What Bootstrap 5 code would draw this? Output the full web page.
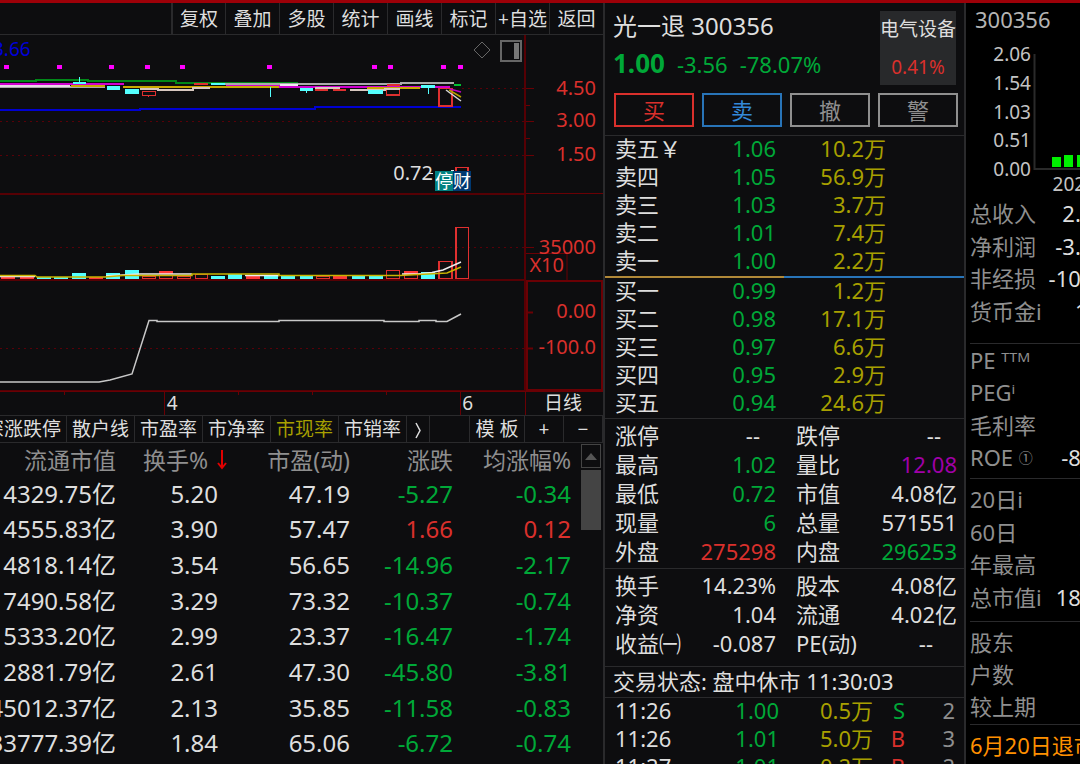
<!DOCTYPE html>
<html lang="zh-CN">
<head>
<meta charset="utf-8">
<meta name="viewport" content="width=device-width, initial-scale=1">
<title>光一退 300356</title>
<link href="https://cdn.jsdelivr.net/npm/bootstrap@5.3.0/dist/css/bootstrap.min.css" rel="stylesheet">
<style>
:root{--panel:#0d0d0f;--rule:#2a2a2c;--up:#d9302c;--down:#00a838;--vol:#a8a000;--ink:#dedede;--dim:#8f8f8f}
body{background:var(--panel);color:var(--ink);font-family:"Noto Sans","Noto Sans CJK SC",sans-serif;font-size:22px;line-height:28px;border-top:3px solid #9c0008;white-space:nowrap}
button{background:none;border:0;color:inherit;padding:0}
.up{color:var(--up)}.down{color:var(--down)}.vol{color:var(--vol)}.dim{color:var(--dim)}.purple{color:#a000a8}.amber{color:#ff9000;padding-top:6px}
.rule-b{border-bottom:1px solid var(--rule)}
.rule-t{border-top:1px solid var(--rule)}
.left-pane{min-width:0;flex:1 1 0}
.quote-pane{flex:0 0 363px;border-left:2px solid var(--rule);border-right:2px solid var(--rule)}
.info-pane{flex:0 0 114px;background:#000}
.tool-row{height:32px;font-size:19px;line-height:30px}
.tool-row button{width:54px;border-left:1px solid var(--rule)}
.tool-row button:first-child{border-left-width:2px}
.plot{height:356px}
.plot-main{min-width:0}
.axis-col{flex:0 0 77px}
.fs-axis{font-size:20px}
.time-row{height:24px;font-size:19px;line-height:25px}
.month-a{left:27%}.month-b{right:130px}.period{right:21px}
.price-low{right:93px;top:124px;font-size:20px}
.flags{right:55px;top:136px;font-size:18px;line-height:20px;color:#fff}
.flag-stop{background:#008080}.flag-fin{background:#003870}
.base-val{left:-7px;top:0;font-size:19px;color:#0000d8}
.chart-tools{right:4px;top:3px}
.tab-row{height:28px;font-size:19px;line-height:26px}
.tab-row button,.tab-gap{flex:0 0 68px;min-width:0;border-right:1px solid var(--rule)}
.tab-row .tab-first{flex-basis:67px;overflow:hidden;padding-right:5px}
.tab-row .tab-gap{flex:1 1 0}
.tab-row .w-more{flex-basis:23px}.tab-row .w-tpl{flex-basis:55px}.tab-row .w-sign{flex-basis:39px}
.rank-wrap{min-width:0}
.rank{width:100%;height:318px;font-size:24px;table-layout:fixed}
.rank thead{height:33px}
.rank th{font-weight:400;font-size:23px;color:#8f8f8f}
.rank td,.rank th{padding:0;text-align:right}
.rank tbody td{height:35px}
.sort-key{margin-right:-10px}
.scroller{flex:0 0 22px;margin-left:10px;padding:1px 2px 0 0;gap:2px}
.scroller button{height:24px;border:1px solid #444}
.thumb{height:60px;background:#444}
.title-line{font-size:24px;line-height:30px}
.last-price{font-size:26px}
.sector{width:76px;height:74px;background:#28292b;font-size:19px}
.trade-row{padding:8px 0 8px 9px}
.btn-trade{height:34px;flex:0 0 80px;border:2px solid #8f8f8f;color:#8f8f8f;border-radius:0;font-size:22px;line-height:28px}
.btn-trade.buy{border-color:var(--up);color:var(--up)}
.btn-trade.sell{border-color:#2874b8;color:#3388d8}
.sheet{table-layout:fixed;width:100%;line-height:24px}
.sheet td,.sheet th{padding:0;font-weight:400;height:28px;vertical-align:top}
.sheet tr>:first-child{padding-left:10px}
.sheet th:nth-child(3){padding-left:20px}
.facts td,.facts th{height:29px;line-height:28px}
.facts-box{padding:2px 0}
.status{line-height:28px;padding-bottom:2px}
.split{height:2px;background:linear-gradient(90deg,#b08838 0 50%,#2874b8 50%)}
.info-code{color:#b4b4b4;padding:2px 0 2px 5px}
.info-group{height:130px;color:#8f8f8f}
.info-group b{font-weight:400;color:var(--ink)}
.info-group>div{width:142px}
.info-group.income>div{width:158px}
.roe-mark{font-size:14px;vertical-align:3px}
.holders{padding-top:6px}
.mini{height:162px;font-size:19px}
</style>
</head>
<body class="vh-100 overflow-hidden">
<div class="d-flex h-100 overflow-hidden">

<main class="left-pane overflow-hidden">
  <div class="tool-row d-flex justify-content-end rule-b">
    <button type="button">复权</button><button type="button">叠加</button><button type="button">多股</button><button type="button">统计</button><button type="button">画线</button><button type="button">标记</button><button type="button">+自选</button><button type="button">返回</button>
  </div>

  <div class="plot d-flex">
    <div class="plot-main flex-grow-1 position-relative overflow-hidden">
      <svg width="100%" height="356" viewBox="0 35 526 356" preserveAspectRatio="none" fill="none" class="d-block" shape-rendering="crispEdges">
        <g stroke="#580008" stroke-width="1" stroke-dasharray="2 4"><path d="M462 88.500H526M0 121.500H526M0 155.500H526M0 247.500H526M0 348.500H526"/></g>
        <g stroke="#560004" stroke-width="2"><path d="M0 194H526M0 280H526M0 391H526"/><path d="M525 35V391"/></g>
        <g fill="#f0f"><path d="M4 65h5v4h-5zM57 65h5v4h-5zM109 65h5v4h-5zM145 65h5v4h-5zM180 65h5v4h-5zM267 65h5v4h-5zM372 65h5v4h-5zM388 65h5v4h-5zM441 65h5v4h-5zM458 65h5v4h-5z"/></g>
        <!-- price lines -->
        <g stroke-width="2">
          <path stroke="#008818" d="M0 81H36V79.500H88V81H176V82.500H298"/>
          <path stroke="#aaa" d="M0 87H105M212 84H401V82.500H454"/>
          <path stroke="#e8d8e8" d="M0 86H70"/>
          <path stroke="#d000d0" d="M0 84H124M226 85.500H280M279 87H450"/>
          <path stroke="#c8a800" d="M71 86H105M123 87H279M367 88H420"/>
          <path stroke="#d8c8c0" d="M140 88.500H158V90H193V88H210M315 88H340M350 89.500H385V88.500H400"/>
          <path stroke="#00c030" d="M454 84.500H461"/>
          <path stroke="#0000d0" d="M0 110H140V108.500H315V107H461"/>
          <path stroke="#eee" d="M280 85H298"/>
        </g>
        <g fill="#54ffff"><path d="M73 81.500h13v2.500H73zM79 77h1v6h-1zM107 86h13v4h-13zM125 89h14v5h-14zM211 82.500h14v2.500h-14zM270 87h1v10h-1zM300 88h13v3h-13zM306 91h1v2h-1zM368 90h15v3.500h-15zM421 85h14v3h-14zM428 88h1v6h-1z"/></g>
        <g stroke="#e03030" stroke-width="1.500"><path d="M142.500 91.500h13v4h-13zM148.500 96v1M194 84h14M315 90h13M333 90h13M387 85h13M386.500 90v5h13v-5M439 88.500h13v17.500h-13zM456 178V167.500H468V178"/></g>
        <g shape-rendering="auto" stroke-width="1.500"><path stroke="#d8d8d8" d="M446 90L461 101"/><path stroke="#b8a000" d="M449 90L461 97"/><path stroke="#c000c0" d="M450 89L461 92"/></g>
        <path stroke="#eee" d="M429 173.500H433M451 170.500H454"/>
        <!-- volume -->
        <g fill="#ff3838"><path d="M1 277h14v2H1zM20 277h14v2H20zM89 277h14v2H89zM246 275h14v4h-14zM333 276h14v3h-14zM159 271h14v3h-14zM404 271h14v3h-14z"/></g>
        <g fill="#54ffff"><path d="M37 277h14v2H37zM54 277h14v2H54zM72 273h14v6H72zM106 273h14v6h-14zM125 270h14v9h-14zM211 276h14v3h-14zM228 274h14v5h-14zM264 275h14v4h-14zM281 276h14v3h-14zM300 276h13v3h-13zM352 276h13v3h-13zM369 276h14v3h-14zM421 272h14v7h-14z"/></g>
        <g stroke="#e03030"><path d="M142.500 276.500h13v2h-13zM159.500 275.500h13v3h-13zM177.500 276.500h13v2h-13zM195.500 274.500h12v4h-12zM316.500 276.500h13v2h-13zM386.500 270.500h13v8h-13zM404.500 274.500h13v4h-13z"/><path stroke-width="1.500" d="M439 261.500h13v17h-13zM456 227.500H468.500V278.500H456z"/></g>
        <g shape-rendering="auto" stroke-width="1.500"><path stroke="#eee" d="M0 276.500H35M106 276L123 275L140 274H192M245 275.500H279M402 274H418L432 272.500L443 270L461 262"/><path stroke="#c8b400" d="M0 275.500H35L37 277H105L123 275.500H192V274H279V275.500H400L447 273L461 267"/></g>
        <!-- indicator -->
        <path shape-rendering="auto" stroke="#c8c8c8" stroke-width="1.500" d="M0 382H99L110 380L132 374L149 320.500H157V321.500H279V320.500H384V321.500H419V320.500H436V321.500H447L461 314"/>
      </svg>
      <span class="base-val position-absolute">3.66</span>
      <span class="price-low position-absolute">0.72</span>
      <div class="flags position-absolute d-flex"><span class="flag-stop">停</span><span class="flag-fin">财</span></div>
      <svg class="chart-tools position-absolute" width="50" height="26" fill="none"><path stroke="#666" d="M10 4l8 8-8 8-8-8z"/><path stroke="#666" stroke-width="2" d="M29 3h20v20H29z"/><path fill="#777" d="M42 5h5v16h-5z"/></svg>
    </div>
    <svg class="axis-col fs-axis" width="77" height="356" viewBox="526 35 77 356" fill="none">
      <g stroke="#6a0004" stroke-width="1"><path d="M526 88.500h8M526 105.500h4M526 121.500h8M526 138.500h4M526 155.500h8M526 193.500h77M526 247.500h8M526 253.500h41V280"/><path stroke-width="2" d="M527 281H602V390H527zM527 312.500h6M527 348.500h6"/></g>
      <g fill="#d9302c" text-anchor="end"><text x="596" y="95">4.50</text><text x="596" y="127">3.00</text><text x="596" y="161">1.50</text><text x="596" y="254">35000</text><text x="564" y="272">X10</text><text x="596" y="318">0.00</text><text x="596" y="354">-100.0</text></g>
    </svg>
  </div>

  <div class="time-row position-relative">
    <svg class="w-100 d-block" height="24" viewBox="0 0 603 24" preserveAspectRatio="none"><path stroke="#6a0004" fill="none" d="M0 .5H603M164.500 0V24M460.500 0V24M525.500 0V24M64.500 0v4M238.500 0v4M312.500 0v4M386.500 0v4"/></svg>
    <span class="month-a position-absolute top-0 ps-1">4</span>
    <span class="month-b position-absolute top-0">6</span>
    <span class="period position-absolute top-0">日线</span>
  </div>

  <div class="tab-row d-flex rule-t rule-b">
    <button type="button" class="tab-first d-flex justify-content-end">深涨跌停</button><button type="button">散户线</button><button type="button">市盈率</button><button type="button">市净率</button><button type="button" class="vol">市现率</button><button type="button">市销率</button><button type="button" class="w-more" aria-label="更多"><svg width="9" height="17" fill="none" stroke="#ddd" stroke-width="1.500"><path d="M2 1l4 7.500L2 16"/></svg></button><span class="tab-gap"></span><button type="button" class="w-tpl">模 板</button><button type="button" class="w-sign">+</button><button type="button" class="w-sign">−</button>
  </div>

  <div class="d-flex">
    <div class="rank-wrap flex-grow-1">
    <table class="rank">
      <colgroup><col style="width:116px"><col style="width:102px"><col style="width:132px"><col style="width:103px"><col></colgroup>
      <thead><tr><th>流通市值</th><th><div class="sort-key d-flex justify-content-end align-items-center">换手%<svg width="12" height="22" class="ms-2" fill="none" stroke="#e00000" stroke-width="2"><path d="M6 1V19M2 14l4 5 4-5"/></svg></div></th><th>市盈(动)</th><th>涨跌</th><th>均涨幅%</th></tr></thead>
      <tbody>
      <tr><td>4329.75亿</td><td>5.20</td><td>47.19</td><td class="down">-5.27</td><td class="down">-0.34</td></tr>
      <tr><td>4555.83亿</td><td>3.90</td><td>57.47</td><td class="up">1.66</td><td class="up">0.12</td></tr>
      <tr><td>4818.14亿</td><td>3.54</td><td>56.65</td><td class="down">-14.96</td><td class="down">-2.17</td></tr>
      <tr><td>7490.58亿</td><td>3.29</td><td>73.32</td><td class="down">-10.37</td><td class="down">-0.74</td></tr>
      <tr><td>5333.20亿</td><td>2.99</td><td>23.37</td><td class="down">-16.47</td><td class="down">-1.74</td></tr>
      <tr><td>2881.79亿</td><td>2.61</td><td>47.30</td><td class="down">-45.80</td><td class="down">-3.81</td></tr>
      <tr><td><div class="d-flex justify-content-end">45012.37亿</div></td><td>2.13</td><td>35.85</td><td class="down">-11.58</td><td class="down">-0.83</td></tr>
      <tr><td><div class="d-flex justify-content-end">33777.39亿</div></td><td>1.84</td><td>65.06</td><td class="down">-6.72</td><td class="down">-0.74</td></tr>
      </tbody>
    </table>
    </div>
    <div class="scroller d-flex flex-column">
      <button type="button" class="w-100 d-flex align-items-center justify-content-center" aria-label="向上滚动"><svg width="12" height="7"><path fill="#555" d="M6 0l6 7H0z"/></svg></button>
      <div class="thumb"></div>
    </div>
  </div>
</main>

<section class="quote-pane overflow-hidden">
  <header class="d-flex justify-content-between pt-2 px-2">
    <div>
      <div class="title-line">光一退 300356</div>
      <div class="d-flex align-items-baseline gap-2 pt-2"><b class="last-price down">1.00</b><span class="down ms-1">-3.56</span><span class="down ms-1">-78.07%</span></div>
    </div>
    <div class="sector d-flex flex-column align-items-center justify-content-between py-1"><span>电气设备</span><span class="up">0.41%</span></div>
  </header>
  <div class="trade-row d-flex gap-2 rule-b">
    <button type="button" class="btn-trade buy">买</button><button type="button" class="btn-trade sell">卖</button><button type="button" class="btn-trade">撤</button><button type="button" class="btn-trade">警</button>
  </div>

  <table class="sheet">
    <colgroup><col style="width:90px"><col style="width:81px"><col style="width:110px"><col></colgroup>
    <tbody>
    <tr><th>卖五￥</th><td class="down text-end">1.06</td><td class="vol text-end">10.2万</td><td></td></tr>
    <tr><th>卖四</th><td class="down text-end">1.05</td><td class="vol text-end">56.9万</td><td></td></tr>
    <tr><th>卖三</th><td class="down text-end">1.03</td><td class="vol text-end">3.7万</td><td></td></tr>
    <tr><th>卖二</th><td class="down text-end">1.01</td><td class="vol text-end">7.4万</td><td></td></tr>
    <tr><th>卖一</th><td class="down text-end">1.00</td><td class="vol text-end">2.2万</td><td></td></tr>
    </tbody>
  </table>
  <div class="split"></div>
  <table class="sheet">
    <colgroup><col style="width:90px"><col style="width:81px"><col style="width:110px"><col></colgroup>
    <tbody>
    <tr><th>买一</th><td class="down text-end">0.99</td><td class="vol text-end">1.2万</td><td></td></tr>
    <tr><th>买二</th><td class="down text-end">0.98</td><td class="vol text-end">17.1万</td><td></td></tr>
    <tr><th>买三</th><td class="down text-end">0.97</td><td class="vol text-end">6.6万</td><td></td></tr>
    <tr><th>买四</th><td class="down text-end">0.95</td><td class="vol text-end">2.9万</td><td></td></tr>
    <tr><th>买五</th><td class="down text-end">0.94</td><td class="vol text-end">24.6万</td><td></td></tr>
    </tbody>
  </table>

  <div class="facts-box rule-t rule-b">
  <table class="sheet facts">
    <colgroup><col style="width:90px"><col style="width:81px"><col style="width:81px"><col style="width:100px"><col></colgroup>
    <tbody>
    <tr><th>涨停</th><td class="text-end pe-3">--</td><th>跌停</th><td class="text-end pe-3">--</td><td></td></tr>
    <tr><th>最高</th><td class="text-end down">1.02</td><th>量比</th><td class="text-end purple">12.08</td><td></td></tr>
    <tr><th>最低</th><td class="text-end down">0.72</td><th>市值</th><td class="text-end">4.08亿</td><td></td></tr>
    <tr><th>现量</th><td class="text-end down">6</td><th>总量</th><td class="text-end">571551</td><td></td></tr>
    <tr><th>外盘</th><td class="text-end up">275298</td><th>内盘</th><td class="text-end down">296253</td><td></td></tr>
    </tbody>
  </table>
  </div>
  <div class="facts-box pb-2 rule-b">
  <table class="sheet facts">
    <colgroup><col style="width:90px"><col style="width:81px"><col style="width:81px"><col style="width:100px"><col></colgroup>
    <tbody>
    <tr><th>换手</th><td class="text-end">14.23%</td><th>股本</th><td class="text-end">4.08亿</td><td></td></tr>
    <tr><th>净资</th><td class="text-end">1.04</td><th>流通</th><td class="text-end">4.02亿</td><td></td></tr>
    <tr><th>收益㈠</th><td class="text-end">-0.087</td><th>PE(动)</th><td class="text-end pe-4">--</td><td></td></tr>
    </tbody>
  </table>
  </div>
  <div class="status ps-2 rule-b">交易状态: 盘中休市 11:30:03</div>
  <table class="sheet">
    <colgroup><col style="width:90px"><col style="width:84px"><col style="width:94px"><col style="width:36px"><col style="width:46px"><col></colgroup>
    <tbody>
    <tr><td>11:26</td><td class="down text-end">1.00</td><td class="vol text-end">0.5万</td><td class="down text-end pe-1">S</td><td class="dim text-end">2</td><td></td></tr>
    <tr><td>11:26</td><td class="down text-end">1.01</td><td class="vol text-end">5.0万</td><td class="up text-end pe-1">B</td><td class="dim text-end">3</td><td></td></tr>
    <tr><td>11:27</td><td class="down text-end">1.01</td><td class="vol text-end">0.2万</td><td class="up text-end pe-1">B</td><td class="dim text-end">2</td><td></td></tr>
    </tbody>
  </table>
</section>

<aside class="info-pane overflow-hidden ps-1">
  <div class="info-code">300356</div>
  <svg class="mini d-block" width="130" viewBox="970 35 130 162">
    <g fill="#c4c4c4" text-anchor="end"><text x="1031" y="61">2.06</text><text x="1031" y="90">1.54</text><text x="1031" y="119">1.03</text><text x="1031" y="147">0.51</text><text x="1031" y="176">0.00</text><text x="1096" y="191">2022</text></g>
    <path fill="none" stroke="#2a2a2a" stroke-width="2" d="M1034.500 54V169H1100"/>
    <path fill="#00f000" d="M1052 157h9v10h-9zM1064 155h9v12h-9zM1077 155h9v12h-9z"/>
  </svg>
  <div class="info-group income d-grid align-items-center">
    <div class="d-flex justify-content-between"><span>总收入</span><b>2.34亿</b></div>
    <div class="d-flex justify-content-between"><span>净利润</span><b>-3.56亿</b></div>
    <div class="d-flex justify-content-between"><span>非经损</span><b>-1028万</b></div>
    <div class="d-flex justify-content-between"><span>货币金i</span><b>1.2亿</b></div>
  </div>
  <div class="rule-t mt-3"></div>
  <div class="info-group d-grid align-items-center">
    <div>PE ᵀᵀᴹ</div>
    <div>PEGⁱ</div>
    <div>毛利率</div>
    <div class="d-flex justify-content-between"><span>ROE <span class="roe-mark">①</span></span><b>-8.12</b></div>
  </div>
  <div class="rule-t mt-1"></div>
  <div class="info-group d-grid align-items-center mt-1">
    <div>20日i</div>
    <div class="d-flex justify-content-between"><span>60日</span><b>-78</b></div>
    <div>年最高</div>
    <div class="d-flex justify-content-between"><span>总市值i</span><b>18.60</b></div>
  </div>
  <div class="rule-t mt-2"></div>
  <div class="holders dim"><div>股东</div><div class="my-1">户数</div><div>较上期</div></div>
  <div class="rule-t mt-1"></div>
  <div class="amber">6月20日退市</div>
</aside>
</div>
<script src="https://cdn.jsdelivr.net/npm/bootstrap@5.3.0/dist/js/bootstrap.bundle.min.js"></script>
</body>
</html>
